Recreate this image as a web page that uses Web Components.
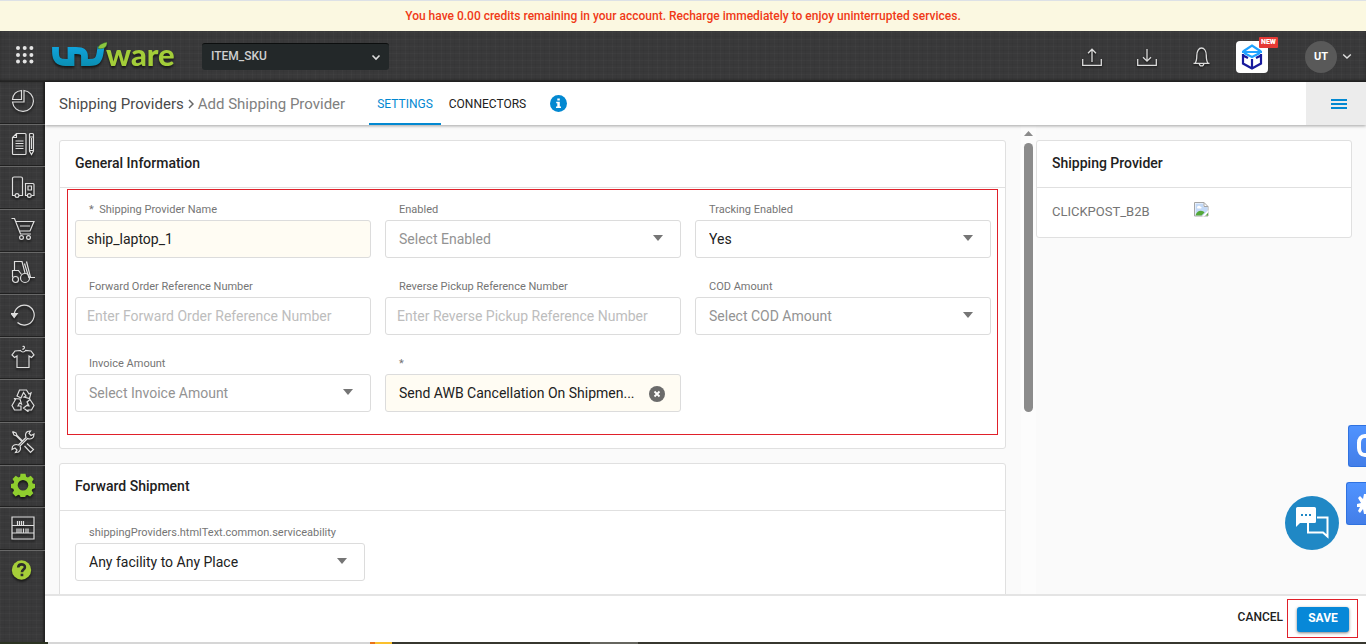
<!DOCTYPE html>
<html lang="en">
<head>
<meta charset="utf-8">
<title>Add Shipping Provider</title>
<style>
    html, body {
        margin: 0;
        height: 100%;
        overflow: hidden;
    }

    body {
        font-family: Roboto, "Liberation Sans", sans-serif;
        font-size: 14px;
        color: #212121;
        --blue: #0288d1;
        --line: #e0e0e0;
        --mark: #e0202a;
        --linen: repeating-linear-gradient(0deg, rgba(255,255,255,.02) 0 1px, transparent 1px 3px, rgba(0,0,0,.04) 3px 4px, transparent 4px 7px),
                 repeating-linear-gradient(90deg, rgba(255,255,255,.02) 0 1px, transparent 1px 4px, rgba(0,0,0,.04) 4px 5px, transparent 5px 9px),
                 #39393a;
    }
</style>
</head>
<body>
<app-shell>
    <credit-banner slot="banner">You have 0.00 credits remaining in your account. Recharge immediately to enjoy uninterrupted services.</credit-banner>
    <top-bar slot="top" facility="ITEM_SKU" user="UT"></top-bar>
    <side-nav slot="nav"></side-nav>
    <page-bar slot="bar" parent="Shipping Providers" current="Add Shipping Provider">
        <tab-link active>SETTINGS</tab-link>
        <tab-link>CONNECTORS</tab-link>
    </page-bar>

    <scroll-pane>
        <info-card heading="General Information">
            <field-grid marked>
                <text-field label="Shipping Provider Name" required value="ship_laptop_1"></text-field>
                <select-field label="Enabled" placeholder="Select Enabled"></select-field>
                <select-field label="Tracking Enabled" value="Yes"></select-field>
                <text-field label="Forward Order Reference Number" placeholder="Enter Forward Order Reference Number"></text-field>
                <text-field label="Reverse Pickup Reference Number" placeholder="Enter Reverse Pickup Reference Number"></text-field>
                <select-field label="COD Amount" placeholder="Select COD Amount"></select-field>
                <select-field label="Invoice Amount" placeholder="Select Invoice Amount"></select-field>
                <select-field label="" required clearable value="Send AWB Cancellation On Shipmen..."></select-field>
            </field-grid>
        </info-card>
        <info-card heading="Forward Shipment">
            <field-grid>
                <select-field label="shippingProviders.htmlText.common.serviceability" value="Any facility to Any Place"></select-field>
            </field-grid>
        </info-card>
    </scroll-pane>

    <info-card slot="aside" heading="Shipping Provider">
        <provider-row>CLICKPOST_B2B</provider-row>
    </info-card>

    <action-bar slot="footer"></action-bar>
    <float-tools slot="float"></float-tools>
</app-shell>

<script>
const render = (el, html) => {
    el.attachShadow({ mode: 'open' }).innerHTML = html
    return el.shadowRoot
}

class AppShell extends HTMLElement {
    constructor() {
        super()
        render(this, `
            <style>
                :host{
                    display:flex;
                    flex-direction:column;
                    height:100vh;
                    background:#fafafa;
                }
                .body{
                    flex:1;
                    min-height:0;
                    display:flex;
                }
                .page{
                    flex:1;
                    min-width:0;
                    display:flex;
                    flex-direction:column;
                }
                .content{
                    flex:1;
                    min-height:0;
                    display:flex;
                }
                main{
                    flex:1;
                    min-width:0;
                    display:flex;
                }
                aside{
                    width:316px;
                    padding:15px 14px 0 0;
                }
                .strip{
                    height:2px;
                    background:linear-gradient(90deg, #2c3322 0 48px, #d6d6d6 48px 370px, #e8731a 370px 375px, #fbc02d 375px 392px, #37372f 392px 590px, #66665f 590px 638px, #37372f 638px);
                }
            </style>
            <slot name="banner"></slot>
            <slot name="top"></slot>
            <div class="body">
                <slot name="nav"></slot>
                <div class="page">
                    <slot name="bar"></slot>
                    <div class="content">
                        <main><slot></slot></main>
                        <aside><slot name="aside"></slot></aside>
                    </div>
                    <slot name="footer"></slot>
                </div>
            </div>
            <div class="strip"></div>
            <slot name="float"></slot>
        `)
    }
}

class CreditBanner extends HTMLElement {
    constructor() {
        super()
        render(this, `
            <style>
                :host{
                    display:block;
                    box-sizing:border-box;
                    height:31px;
                    border-top:1px solid #dde1e6;
                    background:#fbf8e1;
                    color:#f03a17;
                    font-size:12px;
                    font-weight:500;
                    line-height:30px;
                    text-align:center;
                }
            </style>
            <slot></slot>
        `)
    }
}

class TopBar extends HTMLElement {
    connectedCallback() {
        render(this, `
            <style>
                :host{
                    display:flex;
                    align-items:center;
                    box-sizing:border-box;
                    height:51px;
                    padding:0 14px 0 16px;
                    background:var(--linen);
                    box-shadow:inset 0 -2px 2px #222;
                }
                button{
                    display:flex;
                    padding:0;
                    border:0;
                    background:none;
                    color:inherit;
                    font:inherit;
                    cursor:pointer;
                }
                svg{
                    display:block;
                    overflow:visible;
                }
                .apps{
                    padding-bottom:3px;
                }
                .logo{
                    margin:0 24px 0 18px;
                    filter:drop-shadow(0 2px 1px rgba(0,0,0,.6));
                }
                .facility{
                    position:relative;
                    width:187px;
                }
                .facility svg{
                    position:absolute;
                    right:8px;
                    top:11px;
                    pointer-events:none;
                }
                select{
                    appearance:none;
                    display:block;
                    width:100%;
                    height:27px;
                    padding:0 9px 3px;
                    border:0;
                    border-top:1px solid #0c0e0e;
                    border-radius:3px;
                    background:#232829;
                    color:#d0d0d0;
                    font:500 12px Roboto, sans-serif;
                }
                .actions{
                    display:flex;
                    align-items:center;
                    gap:35px;
                    margin-left:auto;
                }
                .actions svg{
                    fill:none;
                    stroke:#dcdcdc;
                    stroke-width:1.3;
                    filter:drop-shadow(0 1px 1px #111);
                }
                .tile{
                    position:relative;
                    align-items:center;
                    justify-content:center;
                    width:32px;
                    height:32px;
                    margin:0 37px 0 24px;
                    border-radius:4px;
                    background:#fff;
                }
                .tile span{
                    position:absolute;
                    left:23px;
                    top:-4px;
                    padding:0 2px;
                    border-radius:1px;
                    background:#e53935;
                    color:#fff;
                    font-size:7px;
                    font-weight:900;
                    line-height:11px;
                }
                .user{
                    align-items:center;
                    gap:5px;
                }
                .user span{
                    width:32px;
                    border-radius:50%;
                    background:#595959;
                    color:#fff;
                    font-size:11px;
                    font-weight:700;
                    line-height:32px;
                    text-align:center;
                }
            </style>
            <button class="apps" aria-label="Apps">
                <svg width="18" height="18" viewBox="0 0 18 18" fill="#e4e4e4">
                    ${[2, 9, 15.5].map(y => [2, 8.7, 15.4].map(x => `<circle cx="${x}" cy="${y}" r="2"/>`).join('')).join('')}
                </svg>
            </button>
            <svg class="logo" width="126" height="32" viewBox="0 0 126 32">
                <defs>
                    <linearGradient id="wave" gradientUnits="userSpaceOnUse" x1="0" y1="6" x2="0" y2="26">
                        <stop offset="0" stop-color="#10a3dc"/>
                        <stop offset="1" stop-color="#0a8db0"/>
                    </linearGradient>
                </defs>
                <path d="M3.500 6v5c0 8 3 10.500 10 10.500h5.500V9.500h5c7 0 8.500 2.500 8.500 6v6h5c8 0 9.500-3 10.500-9l1-6.500" fill="none" stroke="url(#wave)" stroke-width="6.800"/>
                <path d="M46 7.500c.5-4 4-5 9-6.500c.3 4-1.500 7.500-9 6.500z" fill="#8cc63f" stroke="#2c5c2c" stroke-width=".5"/>
                <text x="54" y="25" font-family="Lato, sans-serif" font-size="31" font-weight="900" fill="#a3cd39">ware</text>
            </svg>
            <div class="facility">
                <select aria-label="Facility"><option>${this.getAttribute('facility')}</option></select>
                <svg width="10" height="7" viewBox="0 0 10 7" fill="none" stroke="#ddd" stroke-width="1.600"><path d="M1.500 1.500 5 5 8.500 1.500"/></svg>
            </div>
            <div class="actions">
                <button aria-label="Upload"><svg width="20" height="20" viewBox="0 0 20 20"><path d="M.7 12v6.300h18.600V12M10 15V2.200M6 6.200l4-4 4 4"/></svg></button>
                <button aria-label="Download"><svg width="20" height="20" viewBox="0 0 20 20"><path d="M.7 12v6.300h18.600V12M10 2v12M6 10.200l4 4 4-4"/></svg></button>
                <button aria-label="Notifications"><svg width="20" height="20" viewBox="0 0 20 20"><path d="M1.500 16.300h16M3.200 16c1.500-2 1.600-4 1.600-7.500C4.800 4 6.800 1 9.500 1s4.800 3 4.800 7.500c0 3.500.1 5.500 1.600 7.500M7.300 16.500c.2 3.300 4.300 3.300 4.500 0"/></svg></button>
            </div>
            <button class="tile" aria-label="New app">
                <svg width="22" height="26" viewBox="0 0 22 26" fill="none" stroke-width="2.200">
                    <path d="M2 7.500 11 1.500l9 6M1 8h20M3 9l8 4 8-4" stroke="#1fa2ff"/>
                    <path d="M2 10v9.500l9 5 9-5V10M11 15v9M2 11.500l5 2.500M20 11.500 15 14" stroke="#171a9c"/>
                </svg>
                <span>NEW</span>
            </button>
            <button class="user">
                <span>${this.getAttribute('user')}</span>
                <svg width="10" height="7" viewBox="0 0 10 7" fill="none" stroke="#ddd" stroke-width="1.500"><path d="M1.200 1.500 5 5 8.800 1.500"/></svg>
            </button>
        `)
    }
}

// outline icons of the left rail, all on a 24x24 grid
const navIcons = {
    Dashboard: '<path d="M13 1.500a10.500 10.500 0 1 1-11.500 11.500H13zM1.500 10.500C2 5.500 5.500 2 10.500 1.500v9z"/>',
    Orders: '<path d="M5.500 1.500H14a1 1 0 0 1 1 1v19a1 1 0 0 1-1 1H2.500a1 1 0 0 1-1-1v-16zM5.500 1.500v4h-4M4.500 9h8M4.500 11.500h8M4.500 14h8M4.500 16.500h8M18.500 2.500a1 1 0 0 1 1-1h2a1 1 0 0 1 1 1V19l-2 3.500L18.500 19zM18.500 5h4M18.500 18.500h4M20.500 6v11"/>',
    Shipments: '<path d="M4 20.500H1.500v-17a1.500 1.500 0 0 1 1.500-1.500h7a1.500 1.500 0 0 1 1.500 1.500v17H8M16 20.500h-1.500v-12H22a1 1 0 0 1 1 1v11h-2.500M17 11h3.500v4H17z"/><circle cx="6" cy="20.500" r="1.900"/><circle cx="18.300" cy="20.500" r="1.900"/>',
    Purchase: '<path d="M.5 1.500h3l6 15.500h10.500M5 4.500h18l-4 9.500H8.500M9 9h10"/><circle cx="10.500" cy="20.500" r="1.900"/><circle cx="17.500" cy="20.500" r="1.900"/>',
    Inventory: '<path d="M3.500 10.500v-9h7.500l3 11.500M1.500 17.500v-7h6l3 4M13.500 3.500 18 18M15.500 1.500 19.500 17.500H24"/><circle cx="4.500" cy="19.500" r="3"/><circle cx="14" cy="18" r="4.500"/>',
    Returns: '<path d="M3.200 12A10 10 0 1 1 6.500 19.500"/><path d="M.2 10.500h6L3.200 14.500z" fill="#ddd"/>',
    Products: '<path d="M9.500 5.500 4 6 1 10l2.500 2.500L6 11v11.500h12V11l2.500 1.500L23 10l-3-4-5.500-.5c-1 2-4 2-5 0zM12 5V4c2.500-.5 1.500-3.500-.5-2.500"/>',
    Recycle: '<path d="M8.500 2h7l2.500 4 2-1-1.500 5.500-5.500-1.500 2-1-2.500-3.500-2.500 5.500-4-2zM4.500 11.500 1 17.500l2.500 4.500H10v-4H7l1.500-3 2 1-1.500-5L3 10.500zM19 11.500l4 6-2.500 4.500H17v1.500L12.500 20l4.500-3.500V18h1l-2-4z"/>',
    Tools: '<path d="M1.500 1.500 5 3l1 2.500 6 6M1.500 1.500 3 5l2.500 1 5 5M13.500 16l6 6.500 3-3-6.500-6M16.500 1.500c-2 1.500-2.500 3.500-1.500 6l-7.500 7.500c-2.500-1-4.500-.5-6 1.500l-.5 3 3-1.500 2 2L4.500 22.500l3-.5c2-1.500 2.500-3.500 1.500-6L16.500 8.500c2.500 1 4.500.5 6-1.500l.5-3-3 1.500-2-2L19.500 1z"/>',
    Settings: '<path fill-rule="evenodd" fill="#8fce2e" stroke="none" d="M9.500 0.800h5l.7 3 1.700.8 2.800-1.800 3 3.300-1.600 2.700.6 1.700 2.300.6v4l-2.500.8-.8 1.700 1.600 2.700-3.200 3.200-2.700-1.600-1.700.7-.7 2.400h-4.300l-.7-2.500-1.700-.7-2.700 1.600-3.200-3.300 1.600-2.700-.7-1.700-2.300-.6v-4l2.400-.7.8-1.700-1.700-2.600 3.200-3.300 2.700 1.600 1.700-.7zM12 7a5.300 5.300 0 1 0 0 10.600A5.300 5.300 0 0 0 12 7z"/>',
    Racks: '<path d="M1 1h22v22H1zM1 9.500h22M1 17h22M6.500 5v4M8.500 5v4M10.500 5v4M12.500 5v4M6 12.500v4M8 12.500v4M10 12.500v4M12.500 12.500v4M15 12.500v4M17 12.500v4"/>',
    Help: '<circle cx="10.500" cy="12" r="9.700" fill="#a6ce39" stroke="none"/><path d="M7.200 9.500c.2-4.200 6.700-4 6.700-.3 0 2.300-3 2.300-3 5" stroke="#2c2c2c" stroke-width="2.600"/><path d="M9.600 15.700h2.700v2.500H9.600z" fill="#2c2c2c" stroke="none"/>'
}

class SideNav extends HTMLElement {
    constructor() {
        super()
        const links = Object.keys(navIcons).filter(name => name != 'Help').map(name => this.link(name)).join('')
        render(this, `
            <style>
                :host{
                    display:block;
                    width:45px;
                    background:var(--linen);
                    box-shadow:inset -2px 0 2px #222;
                }
                nav{
                    display:flex;
                    flex-direction:column;
                    height:469px;
                }
                a{
                    flex:1;
                    display:flex;
                    align-items:center;
                    justify-content:center;
                    padding-bottom:3px;
                    border-bottom:1px solid #686868;
                    box-shadow:inset 0 -1px #202020;
                }
                .help{
                    height:38px;
                    border:0;
                    box-shadow:none;
                }
                svg{
                    fill:none;
                    stroke:#dedede;
                    stroke-width:1.2;
                    filter:drop-shadow(0 2px 1px rgba(0,0,0,.6));
                }
            </style>
            <nav>${links}</nav>
            ${this.link('Help', 'help')}
        `)
    }

    link(name, cls = '') {
        return `<a href="#" class="${cls}" aria-label="${name}"><svg width="24" height="24" viewBox="0 0 24 24">${navIcons[name]}</svg></a>`
    }
}

class PageBar extends HTMLElement {
    connectedCallback() {
        render(this, `
            <style>
                :host{
                    position:relative;
                    display:flex;
                    align-items:stretch;
                    height:43px;
                    padding-left:14px;
                    background:#fff;
                    box-shadow:0 1px 3px rgba(0,0,0,.35);
                }
                .crumbs{
                    display:flex;
                    align-items:center;
                    gap:4px;
                    margin-right:24px;
                    color:#808080;
                    font-size:15px;
                    white-space:nowrap;
                }
                .crumbs a{
                    color:#4a4a4a;
                    text-decoration:none;
                }
                .info{
                    align-self:center;
                    width:17px;
                    height:17px;
                    margin-left:16px;
                }
                button{
                    width:60px;
                    margin-left:auto;
                    padding:3px 0 0 6px;
                    border:0;
                    background:#ececec;
                }
            </style>
            <div class="crumbs">
                <a href="#">${this.getAttribute('parent')}</a>
                <svg width="6" height="10" viewBox="0 0 6 10" fill="none" stroke="#666" stroke-width="1.500"><path d="M1 1l4 4-4 4"/></svg>
                <span>${this.getAttribute('current')}</span>
            </div>
            <slot></slot>
            <svg class="info" viewBox="0 0 17 17">
                <circle cx="8.500" cy="8.500" r="8.500" fill="#0288d1"/>
                <path d="M7.300 3.500h2.500v2H7.300zM6.200 6.800h3.600v4.700h1.200V13H6v-1.500h1.300V8.300H6.200z" fill="#fff"/>
            </svg>
            <button aria-label="Menu">
                <svg width="16" height="11" viewBox="0 0 16 11" fill="#0288d1"><path d="M0 0h16v2H0zM0 4h16v2H0zM0 8h16v2H0z"/></svg>
            </button>
        `)
    }
}

class TabLink extends HTMLElement {
    constructor() {
        super()
        render(this, `
            <style>
                :host{
                    display:flex;
                    color:#212121;
                }
                :host([active]){
                    color:var(--blue);
                    box-shadow:inset 0 -2px var(--blue);
                }
                a{
                    padding:0 8px;
                    color:inherit;
                    font-size:12px;
                    line-height:44px;
                    text-decoration:none;
                }
            </style>
            <a href="#"><slot></slot></a>
        `)
    }
}

class ScrollPane extends HTMLElement {
    constructor() {
        super()
        render(this, `
            <style>
                :host{
                    flex:1;
                    min-width:0;
                    display:flex;
                }
                .view{
                    flex:1;
                    min-width:0;
                    display:flex;
                    flex-direction:column;
                    gap:14px;
                    padding:15px 15px 0 14px;
                    overflow:hidden;
                }
                .bar{
                    display:flex;
                    flex-direction:column;
                    align-items:center;
                    gap:7px;
                    width:15px;
                    padding-top:6px;
                    background:#fcfcfc;
                }
                .thumb{
                    width:9px;
                    height:58%;
                    border-radius:5px;
                    background:#8b8b8b;
                }
            </style>
            <div class="view"><slot></slot></div>
            <div class="bar">
                <svg width="9" height="5" viewBox="0 0 9 5"><path d="M0 5 4.500 0 9 5z" fill="#8b8b8b"/></svg>
                <div class="thumb"></div>
            </div>
        `)
    }
}

class InfoCard extends HTMLElement {
    connectedCallback() {
        render(this, `
            <style>
                :host{
                    display:block;
                    flex:none;
                    border:1px solid var(--line);
                    border-radius:3px;
                    background:#fff;
                }
                h2{
                    margin:0;
                    padding:0 15px 2px;
                    border-bottom:1px solid var(--line);
                    font-size:14px;
                    font-weight:500;
                    line-height:44px;
                }
            </style>
            <h2>${this.getAttribute('heading')}</h2>
            <slot></slot>
        `)
    }
}

class FieldGrid extends HTMLElement {
    constructor() {
        super()
        render(this, `
            <style>
                :host{
                    display:grid;
                    grid-template-columns:repeat(3, minmax(0, 1fr));
                    gap:22px;
                    padding:15px 15px 30px;
                }
                :host([marked]){
                    column-gap:14px;
                    margin:1px 7px 13px;
                    padding:13px 6px 22px 7px;
                    border:1px solid var(--mark);
                }
            </style>
            <slot></slot>
        `)
    }
}

const fieldStyle = `
    :host{
        display:block;
    }
    label{
        display:block;
        height:14px;
        margin:0 0 3px 14px;
        color:#757575;
        font-size:11px;
        line-height:14px;
        white-space:pre;
    }
    .box{
        position:relative;
        display:flex;
        align-items:center;
        box-sizing:border-box;
        height:38px;
        border:1px solid #dcdcdc;
        border-radius:3px;
        background:#fff;
    }
    :host([required]) .box{
        background:#fffcf3;
    }
    input, select{
        appearance:none;
        flex:1;
        min-width:0;
        height:100%;
        padding:0;
        border:0;
        outline:0;
        background:none;
        color:#212121;
        font:14px Roboto, sans-serif;
    }
`

class TextField extends HTMLElement {
    connectedCallback() {
        const star = this.hasAttribute('required') ? '*  ' : ''
        render(this, `
            <style>
                ${fieldStyle}
                input{
                    margin:0 26px 0 11px;
                }
                input::placeholder{
                    color:#bdbdbd;
                }
            </style>
            <label for="control">${star}${this.getAttribute('label')}</label>
            <div class="box"><input id="control" type="text" value="${this.getAttribute('value') || ''}" placeholder="${this.getAttribute('placeholder') || ''}"></div>
        `)
    }
}

class SelectField extends HTMLElement {
    connectedCallback() {
        const star = this.hasAttribute('required') ? '*' : ''
        const value = this.getAttribute('value')
        const end = this.hasAttribute('clearable')
            ? `<button aria-label="Clear"><svg width="16" height="16" viewBox="0 0 16 16"><circle cx="8" cy="8" r="8" fill="#6b6b6b"/><path d="M5.500 5.500l5 5M10.500 5.500l-5 5" stroke="#fff" stroke-width="1.800"/></svg></button>`
            : `<svg class="arrow" width="10" height="6" viewBox="0 0 10 6"><path d="M0 0h10L5 6z" fill="#757575"/></svg>`
        render(this, `
            <style>
                ${fieldStyle}
                select{
                    padding:0 36px 0 13px;
                }
                select.empty{
                    color:#939393;
                }
                .arrow{
                    position:absolute;
                    right:17px;
                    top:14px;
                    pointer-events:none;
                }
                button{
                    position:absolute;
                    right:15px;
                    top:11px;
                    display:flex;
                    padding:0;
                    border:0;
                    background:none;
                }
            </style>
            <label for="control">${star}${this.getAttribute('label')}</label>
            <div class="box">
                <select id="control" class="${value ? '' : 'empty'}"><option>${value || this.getAttribute('placeholder')}</option></select>
                ${end}
            </div>
        `)
    }
}

class ProviderRow extends HTMLElement {
    constructor() {
        super()
        render(this, `
            <style>
                :host{
                    display:grid;
                    grid-template-columns:1fr 1fr;
                    align-items:start;
                    padding:14px 15px 15px;
                    color:#757575;
                    font-size:13px;
                    line-height:20px;
                }
                svg{
                    display:block;
                }
            </style>
            <span><slot></slot></span>
            <svg width="16" height="16" viewBox="0 0 16 16" role="img" aria-label="Provider logo">
                <path d="M.5.500h9.500l4 4v9.500H.5z" fill="#fff" stroke="#a5a5a5"/>
                <path d="M1.500 1.500h8v3.500h4v4l-4.500 4.500h-7.500z" fill="#c3d9f7"/>
                <path d="M3 5.500c0-2 3-2.500 3.500-.8 1.500 0 1.500 1.800 0 1.800H4c-.6 0-1-.4-1-1z" fill="#fff"/>
                <path d="M1.500 13.500c1-4 4.500-6 8-4l1 1-3 3z" fill="#54a838"/>
                <path d="M8 14.500 14.500 8v2L10 14.500z" fill="#fff"/>
                <path d="M11.500 13.500 14 11v2.500z" fill="#54a838"/>
                <path d="M10 .5v4h4" fill="none" stroke="#a5a5a5"/>
            </svg>
        `)
    }
}

class ActionBar extends HTMLElement {
    constructor() {
        super()
        render(this, `
            <style>
                :host{
                    position:relative;
                    display:flex;
                    align-items:center;
                    justify-content:flex-end;
                    gap:4px;
                    height:44px;
                    padding:0 8px 2px 0;
                    border-top:2px solid #e4e4e4;
                    background:#fff;
                }
                button{
                    height:25px;
                    padding:0 0 3px;
                    border:0;
                    background:none;
                    color:#212121;
                    font:500 12px Roboto, sans-serif;
                }
                .mark{
                    padding:7px 8px 5px 9px;
                    border:1px solid var(--mark);
                }
                .save{
                    display:block;
                    width:52px;
                    border-radius:3px;
                    background:#0788d8;
                    color:#fff;
                    font-weight:700;
                    box-shadow:0 1px 3px rgba(0,0,0,.5);
                }
            </style>
            <button>CANCEL</button>
            <div class="mark"><button class="save">SAVE</button></div>
        `)
    }
}

class FloatTools extends HTMLElement {
    constructor() {
        super()
        render(this, `
            <style>
                button{
                    position:fixed;
                    box-sizing:border-box;
                    padding:0;
                    border:0;
                }
                svg{
                    display:block;
                }
                .chat{
                    right:27px;
                    bottom:94px;
                    width:54px;
                    height:54px;
                    border-radius:50%;
                    background:#2088c5;
                }
                .tab{
                    right:0;
                    border:1px solid #2f72e0;
                    border-right:0;
                    border-radius:3px 0 0 3px;
                    background:linear-gradient(#5093ff, #437ee8);
                    overflow:hidden;
                }
                .ring{
                    bottom:177px;
                    width:18px;
                    height:42px;
                }
                .star{
                    bottom:119px;
                    width:20px;
                    height:43px;
                }
            </style>
            <button class="tab ring" aria-label="Open widget">
                <svg width="17" height="40" viewBox="0 0 17 40"><path d="M18 10h-2c-4 0-6 3-6 7v5c0 4 2 7 6 7h2" fill="none" stroke="#fff" stroke-width="4"/></svg>
            </button>
            <button class="tab star" aria-label="Assistant">
                <svg width="19" height="41" viewBox="0 0 19 41"><path d="M19 11h-2l-1 5-3-3-2 2 3 5-4 1v3h3l-2 4 2 2 3-4 1 5h2z" fill="#fff"/></svg>
            </button>
            <button class="chat" aria-label="Chat">
                <svg width="54" height="54" viewBox="0 0 54 54">
                    <path d="M32 21.500h10.500v19l-4.500-4H23V26" fill="none" stroke="#fff" stroke-width="2"/>
                    <path d="M12.500 11h17a1.500 1.500 0 0 1 1.500 1.500v13a1.500 1.500 0 0 1-1.500 1.500H15l-4 4V12.500a1.500 1.500 0 0 1 1.500-1.500z" fill="#fff"/>
                    <path d="M16 18h2v2h-2zM20 18h2v2h-2zM24 18h2v2h-2z" fill="#2088c5"/>
                </svg>
            </button>
        `)
    }
}

customElements.define('app-shell', AppShell)
customElements.define('credit-banner', CreditBanner)
customElements.define('top-bar', TopBar)
customElements.define('side-nav', SideNav)
customElements.define('page-bar', PageBar)
customElements.define('tab-link', TabLink)
customElements.define('scroll-pane', ScrollPane)
customElements.define('info-card', InfoCard)
customElements.define('field-grid', FieldGrid)
customElements.define('text-field', TextField)
customElements.define('select-field', SelectField)
customElements.define('provider-row', ProviderRow)
customElements.define('action-bar', ActionBar)
customElements.define('float-tools', FloatTools)
</script>
</body>
</html>
